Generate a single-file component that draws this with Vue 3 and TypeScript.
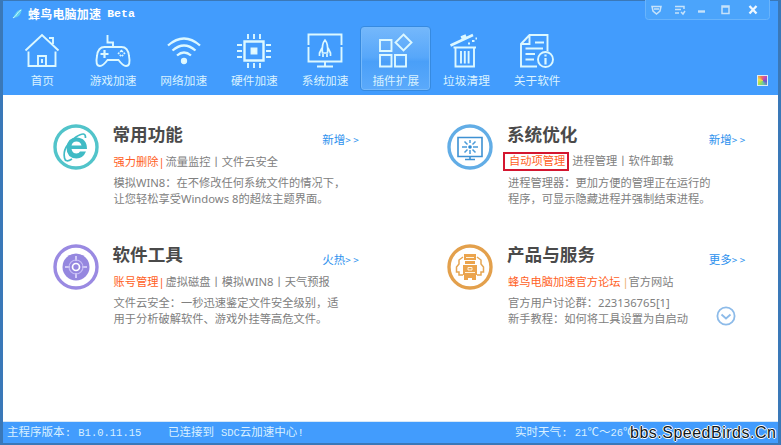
<script setup lang="ts">
import { ref } from 'vue'

interface Tab {
  id: string
  label: string
}
interface Card {
  id: string
  title: string
  more: string
  hot: string
  boxed?: boolean
  divider: string
  links: string
  desc: string[]
}

const tabs: Tab[] = [
  { id: 'home', label: '首页' },
  { id: 'game', label: '游戏加速' },
  { id: 'wifi', label: '网络加速' },
  { id: 'chip', label: '硬件加速' },
  { id: 'system', label: '系统加速' },
  { id: 'plugin', label: '插件扩展' },
  { id: 'trash', label: '垃圾清理' },
  { id: 'about', label: '关于软件' },
]
const active = ref('plugin')

const cards: Card[] = [
  {
    id: 'browser',
    title: '常用功能',
    more: '新增',
    hot: '强力删除',
    divider: '|',
    links: '流量监控丨文件云安全',
    desc: ['模拟WIN8：在不修改任何系统文件的情况下，', '让您轻松享受Windows 8的超炫主题界面。'],
  },
  {
    id: 'monitor',
    title: '系统优化',
    more: '新增',
    hot: '自动项管理',
    boxed: true,
    divider: '',
    links: '进程管理丨软件卸载',
    desc: ['进程管理器：更加方便的管理正在运行的', '程序，可显示隐藏进程并强制结束进程。'],
  },
  {
    id: 'tools',
    title: '软件工具',
    more: '火热',
    hot: '账号管理',
    divider: '|',
    links: '虚拟磁盘丨模拟WIN8丨天气预报',
    desc: ['文件云安全：一秒迅速鉴定文件安全级别，适', '用于分析破解软件、游戏外挂等高危文件。'],
  },
  {
    id: 'service',
    title: '产品与服务',
    more: '更多',
    hot: '蜂鸟电脑加速官方论坛',
    divider: '|',
    links: '官方网站',
    desc: ['官方用户讨论群：223136765[1]', '新手教程：如何将工具设置为自启动'],
  },
]
</script>

<template>
  <div class="window">
    <header class="head">
      <div class="titlebar">
        <svg class="logo" viewBox="0 0 12 12"><path d="M1 10C4 9 3 3 11 1C10 6 8 10 1 10Z" fill="#5fd0ef" /><path d="M2 10C6 8 6 4 10 2" stroke="#c9f6ff" fill="none" /></svg>
        <span class="app-name">蜂鸟电脑加速</span><span class="beta">Beta</span>
        <svg class="controls" viewBox="0 0 125 20">
          <path d="M.5 0V16.500Q.5 19.500 3.500 19.500H121.500Q124.500 19.500 124.500 16.500V0" fill="#4ba4fb" stroke="#69b4fc" />
          <g fill="none" stroke="#c6e2fa" stroke-width="1.500">
            <path d="M7 6.500H16L15 11L11.500 14L8 11ZM9 9H14" />
            <path d="M30 6.500H39V9M30 9.500H36M30 13H34M36 12L38 14L40 11" />
            <path d="M53 11.500H60" stroke-width="2.400" />
            <path d="M77 6H84V13.500H77ZM77 7H84" />
            <path d="M104.500 6L111.500 13.500M111.500 6L104.500 13.500" stroke="#eff8ff" stroke-width="2.300" />
          </g>
        </svg>
      </div>
      <nav class="tabs">
        <button v-for="t in tabs" :key="t.id" class="tab" :class="{ active: t.id === active }" @click="active = t.id">
          <svg class="tab-icon" viewBox="0 0 36 36">
            <g v-if="t.id === 'home'">
              <path d="M1.500 17.500L18 2L34.500 17.500M25 5H29V11" />
              <path d="M4.500 18.500V33H31.500V18.500M14 33V23H22V33M18 26V30" />
            </g>
            <g v-else-if="t.id === 'game'">
              <path d="M12.500 2V9.500H18V14M9.500 14H26.500Q33 14 34 23Q36 33 31 33Q28 33 23.500 27H12.500Q8 33 5 33Q0 33 2 23Q3 14 9.500 14Z" />
              <path d="M9.500 17V25M5.500 21H13.500" stroke-width="2.200" />
              <path d="M26.500 17.500L29.500 20.500L26.500 23.500L23.500 20.500Z" stroke-width="1.500" stroke-dasharray="2 1" />
            </g>
            <g v-else-if="t.id === 'wifi'">
              <path d="M2 12.500Q18 -1.500 34 12.500M6.500 17.500Q18 7.500 29.500 17.500M11 22.500Q18 16.500 25 22.500" stroke-width="2.300" />
              <circle cx="18" cy="28" r="2.200" class="solid" />
            </g>
            <g v-else-if="t.id === 'chip'">
              <path d="M8.500 8.500H27.500V27.500H8.500Z" stroke-width="2.400" />
              <path d="M15.500 15.500H20.500V20.500H15.500Z" class="solid" />
              <path d="M12 1V6M18 1V6M24 1V6M12 30V35M18 30V35M24 30V35M1 12H6M1 18H6M1 24H6M30 12H35M30 18H35M30 24H35" />
            </g>
            <g v-else-if="t.id === 'system'">
              <path d="M1.500 12V1.500H34.500V12M1.500 14V28.500H34.500V14M18 28.500V33M10 33.500H26" />
              <path d="M18 7Q14.500 11 15.500 20H20.500Q21.500 11 18 7ZM15 15L12.500 20V23M21 15L23.500 20V23M16 21V24M20 21V24" stroke-width="1.700" />
            </g>
            <g v-else-if="t.id === 'plugin'">
              <path d="M2 7H13.500V18H2ZM2 22H13.500V33.500H2ZM17 22H28V33.500H17ZM25.500 1.500L33.500 9.500L25.500 17.500L17.500 9.500Z" />
            </g>
            <g v-else-if="t.id === 'trash'">
              <path d="M7.500 14.500H26V33.500H7.500ZM5.500 14.500H28M13 18V30.500M16.800 18V30.500M20.600 18V30.500" />
              <path d="M2.500 12.500L25 2M13 4.500L18 2.500" stroke-width="2.500" />
              <path d="M20 10.500H22M24 8H26.500M27.500 5.500H29" />
            </g>
            <g v-else>
              <path d="M28.500 18V2H10.500L2 11V33.500H18M10.500 3V11H3M16 9.500H25M6.500 15.500H24M6.500 21H16M6.500 26.500H15" />
              <circle cx="26.500" cy="26.500" r="7.500" />
              <path d="M26.500 21.500V23.500M26.500 25V31.500" stroke-width="2.200" />
            </g>
          </svg>
          <span class="tab-label">{{ t.label }}</span>
        </button>
        <span class="skin"></span>
      </nav>
    </header>

    <main class="body">
      <section v-for="c in cards" :key="c.id" class="card" :class="c.id">
        <svg class="badge" viewBox="0 0 46 46">
          <g v-if="c.id === 'browser'">
            <circle cx="23" cy="23" r="21" fill="#fff" stroke="#52c4ca" stroke-width="3.400" />
            <path d="M33 27.500Q30 34.500 23.500 34.500Q13.500 34 13.500 23.500Q14.500 13.500 23.500 13.500Q34 14 34 25H18.500Q19.500 29.500 23.500 29.500Q26 29.500 27 27.500ZM18.500 21.500H28.500Q27.500 17.500 23.500 17.500Q19.500 17.500 18.500 21.500Z" fill="#40bbc5" fill-rule="evenodd" />
            <path d="M32.500 14Q33 6.500 23 13Q9 23 11.500 34Q12.500 39 19 35" fill="none" stroke="#40bbc5" stroke-width="1.700" />
          </g>
          <g v-else-if="c.id === 'monitor'">
            <circle cx="23" cy="23" r="21" fill="#fff" stroke="#62ade6" stroke-width="3.400" />
            <path d="M11 13.500H35V32.500H11ZM23 33V35M18 35.500H28" fill="none" stroke="#3e91d3" stroke-width="1.600" />
            <path d="M23 16V19M23 26V30M15 23H20M26 23H31M17.500 17.500L20.500 20.500M28.500 17.500L25.500 20.500M17.500 28.500L20.500 25.500M28.500 28.500L25.500 25.500" stroke="#4a9bd9" stroke-width="1.500" />
            <circle cx="23" cy="23" r="1.800" fill="#2e8bd5" />
          </g>
          <g v-else-if="c.id === 'tools'">
            <circle cx="23" cy="23" r="21" fill="#fff" stroke="#9a8ae2" stroke-width="3.400" />
            <circle cx="23" cy="23" r="13.500" fill="#9587df" />
            <path d="M23 12V17M23 29V34M12 23H17M29 23H34" stroke="#e4dffd" stroke-width="1.600" />
            <circle cx="23" cy="23" r="7" fill="none" stroke="#c5bbf5" stroke-width="1.200" />
            <circle cx="23" cy="23" r="3.500" fill="#9587df" stroke="#fff" stroke-width="1.700" />
          </g>
          <g v-else>
            <circle cx="23" cy="23" r="21" fill="#fff" stroke="#e3a04c" stroke-width="3.400" />
            <path d="M17 10H29V16H17ZM18 17H28V20H18ZM16 21H30V31H16ZM17 31H21V36H17ZM25 31H29V36H25ZM21 31H25V34H21Z" fill="#eba44d" />
            <path d="M16 13L12 16V20L9.500 23V28H12V31H16M30 13L34 16V20L36.500 23V28H34V31H30" fill="none" stroke="#e5a552" stroke-width="1.500" />
            <path d="M19 13.500H27M18 28.500H28M21 23.500H25V26H21Z" stroke="#fff4df" fill="none" />
          </g>
        </svg>
        <div class="info">
          <div class="title-row">
            <h2>{{ c.title }}</h2>
            <a class="more">{{ c.more }}<i>&gt;</i><i>&gt;</i></a>
          </div>
          <div class="links"><span class="hot" :class="{ boxed: c.boxed }">{{ c.hot }}</span><span class="divider">{{ c.divider }}</span><span>{{ c.links }}</span></div>
          <p v-for="d in c.desc" :key="d">{{ d }}</p>
        </div>
      </section>
      <svg class="expand" viewBox="0 0 20 20"><circle cx="10" cy="10" r="8.600" /><path d="M5.500 8.500L10 12.500L14.500 8.500" /></svg>
    </main>

    <footer class="status">
      <span class="version">主程序版本: <b>B1.0.11.15</b></span>
      <span class="link-state">已连接到 <b>SDC</b>云加速中心!</span>
      <span class="weather">实时天气: <b>21</b>℃～<b>26</b>℃</span>
      <span class="watermark">bbs.SpeedBirds.Cn</span>
    </footer>
  </div>
</template>

<style>
body { margin: 0; overflow: hidden; }
</style>

<style scoped>
.window { box-sizing: border-box; position: relative; width: 781px; height: 445px; display: flex; flex-direction: column; border: solid #3a78b8; border-width: 1px 3px 2px 3px; background: #fff; font-family: "Noto Sans", "Noto Sans CJK SC", sans-serif; white-space: nowrap; }
.head { height: 94px; flex: none; background: #429cfd; display: flex; flex-direction: column; }
.titlebar { height: 25px; display: flex; align-items: center; padding: 1px 8px 0 8px; box-sizing: border-box; color: #fff; }
.logo { width: 12px; height: 12px; margin-right: 5px; }
.app-name { font: 700 12px/20px "Noto Sans CJK SC", sans-serif; letter-spacing: .2px; }
.beta { font: 700 11.500px/20px "Liberation Mono", monospace; margin-left: 6px; }
.controls { width: 125px; height: 20px; margin-left: auto; align-self: flex-start; margin-top: -2px; }
.tabs { height: 65px; display: flex; padding-left: 4px; }
.tab { width: 70.700px; height: 65px; flex: none; box-sizing: border-box; margin: 0; border: 1px solid transparent; border-radius: 4px; background: none; padding: 6px 0 0; display: flex; flex-direction: column; align-items: center; color: #d9f2ff; }
.tab.active { background: linear-gradient(#75b8fb, #57a7fa 48%, #4a9ff8 55%, #5baafb); border-color: #368ae0; box-shadow: inset 0 0 0 1px #75b9fb; }
.tab-icon { width: 36px; height: 36px; flex: none; fill: none; stroke: #dcf8ff; stroke-width: 1.900; }
.tab-icon .solid { fill: #e8fcff; }
.tab-label { margin-top: 3px; font: 400 11.700px/16px "Noto Sans CJK SC", sans-serif; }
.skin { width: 11px; height: 11px; box-sizing: border-box; border: 1px solid #dcecf5; margin: 49px 10px 0 auto; background: conic-gradient(from 45deg, #be4ab9, #6a58cc, #69c6a7, #a2e052, #f0df4b, #ed735c, #be4ab9); }

.body { flex: 1; position: relative; display: grid; grid-template-columns: 394px 381px; grid-template-rows: 120px 120px; align-content: start; padding-top: 26px; box-sizing: border-box; border-bottom: 1px solid #d7e8f7; }
.card { display: flex; padding-left: 49.500px; min-width: 0; }
.card:nth-child(even) { padding-left: 50px; }
.badge { width: 46px; height: 46px; flex: none; margin: 3px 14px 0 0; }
.info { width: 250px; color: #808080; font-size: 11.250px; }
.title-row { height: 28px; display: flex; align-items: flex-start; justify-content: space-between; }
h2 { margin: 0; font: 700 17.600px/25px "Noto Sans CJK SC", sans-serif; color: #4a4a4a; }
.more { font: 400 11.500px/16px "Noto Sans CJK SC", sans-serif; color: #2d91ee; margin: 10px 1px 0 0; }
.more i { font-style: normal; font-size: 10px; letter-spacing: 2.600px; }
.card:nth-child(even) .more { margin-right: 9px; }
.links { height: 22px; line-height: 26px; display: flex; padding-left: 1px; }
.card:nth-child(odd) .links span:last-child { margin-left: 4px; }
.hot { color: #ff5f25; }
.divider { color: #ff5f25; width: 3px; }
.hot.boxed { position: relative; margin-left: 1px; }
.hot.boxed::after { content: ""; position: absolute; left: -6px; top: 3px; width: 62px; height: 15px; border: 2px solid #d4162f; }
.monitor .links { line-height: 24px; }
.monitor .links span:last-child { margin-left: 4px; }
.service .divider { color: #ecae6e; margin: 0 3px 0 2px; }
p { margin: 0; padding-left: 1px; height: 15.500px; line-height: 24px; }
.tools p, .service p { line-height: 23px; }
.expand { position: absolute; left: 713px; top: 211px; width: 20px; height: 20px; fill: none; stroke: #8dbbe9; stroke-width: 1.800; }

.status { height: 21px; flex: none; position: relative; background: #429cfd; color: #d9f0ff; display: flex; align-items: center; padding-left: 4px; font: 400 11.500px/22px "Liberation Mono", "Noto Sans CJK SC", monospace; }
.status b { font-weight: 400; font-size: 10.500px; }
.version { width: 161px; }
.link-state { width: 347px; }
.watermark { position: absolute; left: 627px; top: 1px; font: 400 16px/20px "Liberation Sans", sans-serif; letter-spacing: .5px; color: #101820; text-shadow: 1px 0 #fff, -1px 0 #fff, 0 1px #fff, 0 -1px #fff; }
</style>
